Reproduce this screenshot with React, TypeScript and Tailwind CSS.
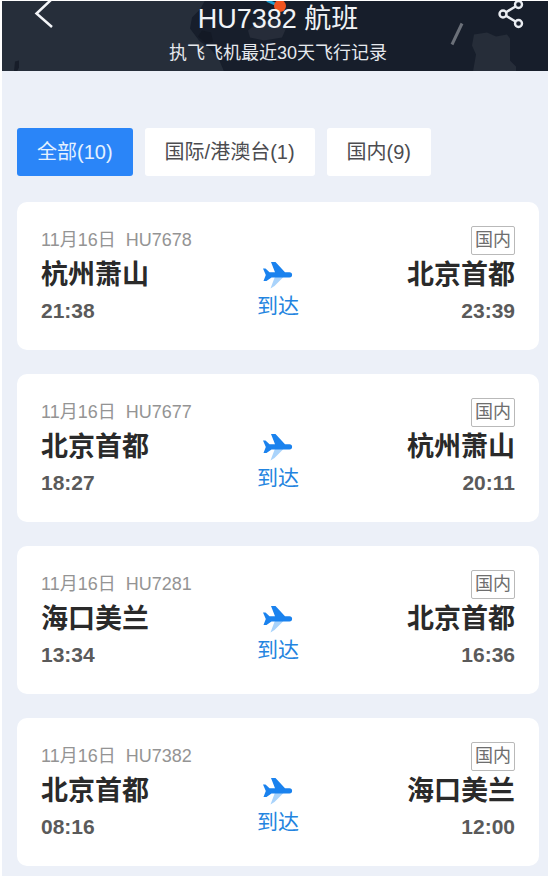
import { useState } from 'react';

type Region = 'intl' | 'domestic';

interface FlightRecord {
  id: number;
  date: string;
  flightNo: string;
  from: string;
  to: string;
  departure: string;
  arrival: string;
  region: Region;
}

const records: FlightRecord[] = [
  { id: 1, date: '11月16日', flightNo: 'HU7678', from: '杭州萧山', to: '北京首都', departure: '21:38', arrival: '23:39', region: 'domestic' },
  { id: 2, date: '11月16日', flightNo: 'HU7677', from: '北京首都', to: '杭州萧山', departure: '18:27', arrival: '20:11', region: 'domestic' },
  { id: 3, date: '11月16日', flightNo: 'HU7281', from: '海口美兰', to: '北京首都', departure: '13:34', arrival: '16:36', region: 'domestic' },
  { id: 4, date: '11月16日', flightNo: 'HU7382', from: '北京首都', to: '海口美兰', departure: '08:16', arrival: '12:00', region: 'domestic' },
];

const tabs = [
  { key: 'all', label: '全部(10)' },
  { key: 'intl', label: '国际/港澳台(1)' },
  { key: 'domestic', label: '国内(9)' },
];

function PlaneIcon() {
  return (
    <svg viewBox="0 0 30 28" className="w-[30px] h-7" aria-hidden="true">
      <path d="M12 14.500h9l-9.500 9.500-4 2.500z" fill="#a9d3fb" />
      <path
        d="M0 6.500h2.500l4 3.700h5.500L8 0h4.500l9.500 10.200h4.500a2.600 2.600 0 0 1 0 5.200H8.500l-5 3.600H0.500l2.300-6z"
        fill="#1a82ee"
      />
    </svg>
  );
}

// Dark map behind the title, with the tracked aircraft and its trail
function HeaderMap() {
  return (
    <svg
      viewBox="0 0 546 71"
      preserveAspectRatio="xMidYMid slice"
      className="absolute inset-0 w-full h-full"
      aria-hidden="true"
    >
      <rect width="546" height="71" fill="#262e3a" />
      <path d="M203 0h343v71H222l-5-12-8-10-12-9-9-12 2-11 8-8z" fill="#171e2b" />
      <path d="M246 30l10-8 18-2 10 8-4 9-18 3-14-3z" fill="#262c39" />
      <path d="M196 36l4-6 9 2 2 9-7 2z" fill="#131925" />
      <path d="M472 34l13-2 9 4 11-2 3 4v22l6 6v5h-43l3-17-4-9z" fill="#262d39" />
      <path d="M12 71l1-10 4-1v7l-2 4z" fill="#171d29" />
      <path d="M460 23l-10 21" stroke="#6b7079" strokeWidth="3" />
      <path d="M265 0l9 4" stroke="#1d9fd0" strokeWidth="3" />
      <circle cx="278" cy="5.500" r="6" fill="#ef5420" />
    </svg>
  );
}

function Header() {
  return (
    <header className="relative flex items-start pl-8 pr-6 pb-0.5 text-white">
      <HeaderMap />
      <button type="button" aria-label="返回" className="relative w-6 h-8">
        <svg viewBox="0 0 24 32" className="w-6 h-8" fill="none" stroke="#f3f5f8" strokeWidth="2.500">
          <path d="M18-2L2.500 12.500 18 26" />
        </svg>
      </button>
      <div className="relative flex-1 text-center">
        <h1 className="text-[27px] leading-9 text-[#f1f3f6]">HU7382 航班</h1>
        <p className="text-lg leading-8 text-[#e6e9ee]">执飞飞机最近30天飞行记录</p>
      </div>
      <button type="button" aria-label="分享" className="relative w-[26px] h-8">
        <svg viewBox="0 0 26 32" className="w-[26px] h-8" fill="none" stroke="#e9ecf1" strokeWidth="2.400">
          <circle cx="5" cy="13" r="3.500" />
          <circle cx="20.500" cy="3.500" r="3.500" />
          <circle cx="20.500" cy="22.500" r="3.500" />
          <path d="M8 11.200l9.500-5.800M8 14.800l9.500 5.800" />
        </svg>
      </button>
    </header>
  );
}

function FlightCard({ record }: { record: FlightRecord }) {
  return (
    <li className="grid grid-cols-[1fr_auto_1fr] px-6 pt-6 pb-[23px] bg-white rounded-[10px]">
      <div>
        <div className="flex gap-2.5 text-lg leading-[29px] text-[#949494]">
          <span>{record.date}</span>
          <span>{record.flightNo}</span>
        </div>
        <div className="text-[27px] leading-10 font-bold text-[#2a2a2a]">{record.from}</div>
        <div className="text-[21px] leading-8 font-bold text-[#5a5a5a]">{record.departure}</div>
      </div>

      <div className="flex flex-col items-center pt-9">
        <PlaneIcon />
        <span className="text-[21px] leading-8 text-[#2384e0]">到达</span>
      </div>

      <div className="flex flex-col items-end">
        <span className="px-[3px] border border-[#b9b9b9] rounded-xs text-lg leading-[27px] text-[#6e6e6e]">
          {record.region === 'domestic' ? '国内' : '国际'}
        </span>
        <div className="text-[27px] leading-10 font-bold text-[#2a2a2a]">{record.to}</div>
        <div className="text-[21px] leading-8 font-bold text-[#5a5a5a]">{record.arrival}</div>
      </div>
    </li>
  );
}

export default function App() {
  const [activeTab, setActiveTab] = useState('all');
  const visible = records.filter((r) => activeTab === 'all' || r.region === activeTab);

  return (
    <div className="flex min-h-screen pt-px px-0.5 bg-white font-['Liberation_Sans','Noto_Sans_CJK_SC',sans-serif]">
      <div className="flex-1 bg-[#ecf0f8]">
        <Header />

        <main className="pl-[15px] pr-[9px] pt-[57px] pb-2">
          {/* Filters */}
          <div className="flex gap-3 mb-[26px]">
            {tabs.map((tab) => (
              <button
                key={tab.key}
                type="button"
                onClick={() => setActiveTab(tab.key)}
                className={`h-12 px-5 rounded-[3px] text-xl whitespace-nowrap ${
                  activeTab === tab.key ? 'bg-[#2a85f8] text-[#e4f1ff]' : 'bg-white text-[#4c4c50]'
                }`}
              >
                {tab.label}
              </button>
            ))}
          </div>

          {/* Flight records */}
          <ul className="flex flex-col gap-6">
            {visible.map((record) => (
              <FlightCard key={record.id} record={record} />
            ))}
          </ul>
        </main>
      </div>
    </div>
  );
}
